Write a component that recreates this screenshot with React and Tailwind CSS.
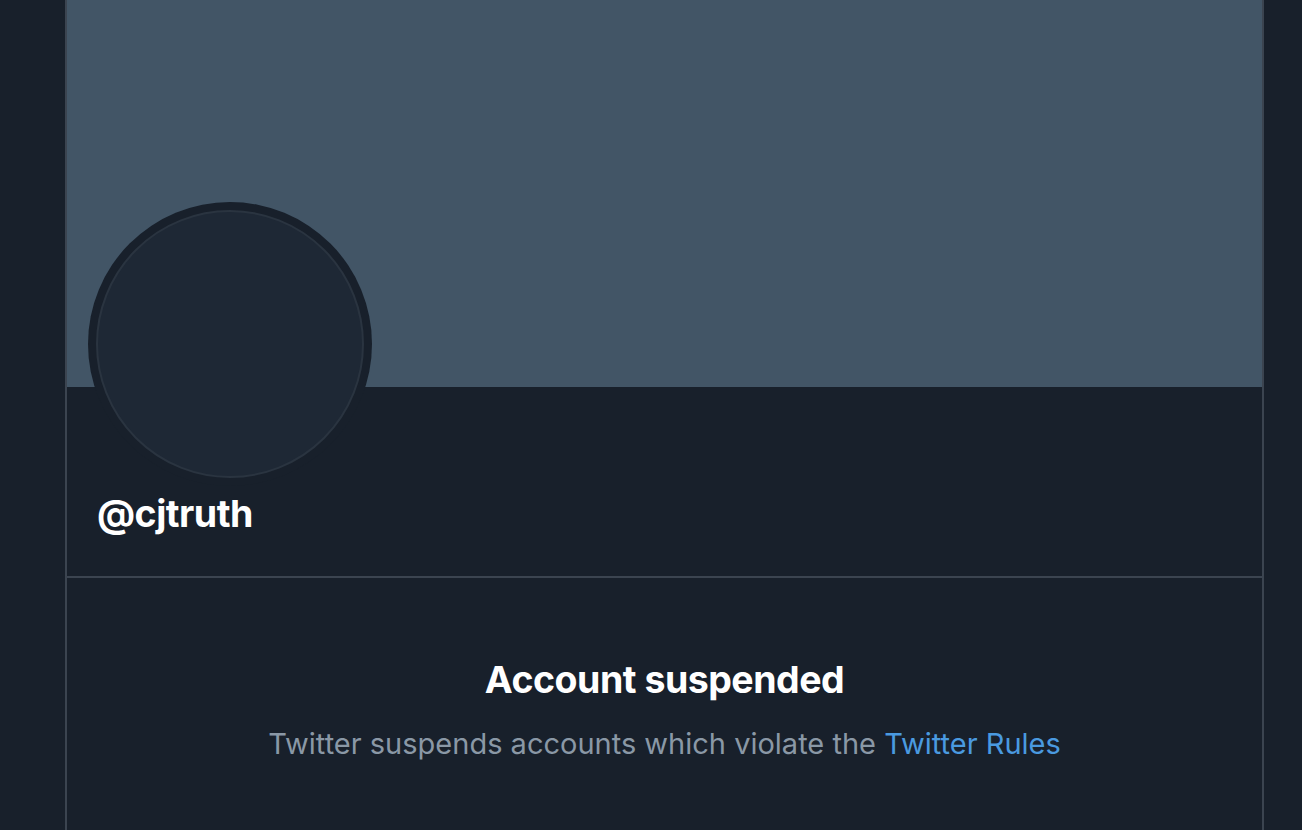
export default function App() {
  return (
    <div
      className="min-h-[830px] h-[830px] overflow-hidden bg-[#18202b] flex pl-[65px]"
      style={{ fontFamily: "Inter, 'Liberation Sans', sans-serif" }}
    >
      <div className="w-[1199px] border-x-2 border-[#3b4450] flex flex-col">
        <div className="relative h-[387px] shrink-0 bg-[#425566]">
          <div className="absolute left-[21px] top-[202px] w-[284px] h-[284px] rounded-full bg-[#18202b] p-[8px]">
            <div className="w-full h-full rounded-full bg-[#1e2835] border-2 border-[#2a3440]" />
          </div>
        </div>
        <div className="h-[191px] shrink-0 border-b-2 border-[#3b4450] flex items-end pb-[44px] pl-[30px]">
          <span className="text-[37.5px] font-bold text-white leading-none tracking-[-0.5px]">@cjtruth</span>
        </div>
        <div className="flex flex-col items-center pt-[83px]">
          <h1 className="text-[37.5px] font-bold text-white leading-none tracking-[-0.5px]">Account suspended</h1>
          <p className="mt-[30px] text-[29px] text-[#8a98a6] leading-none">
            Twitter suspends accounts which violate the{" "}
            <span className="text-[#4a9ae0]">Twitter Rules</span>
          </p>
        </div>
      </div>
    </div>
  );
}
